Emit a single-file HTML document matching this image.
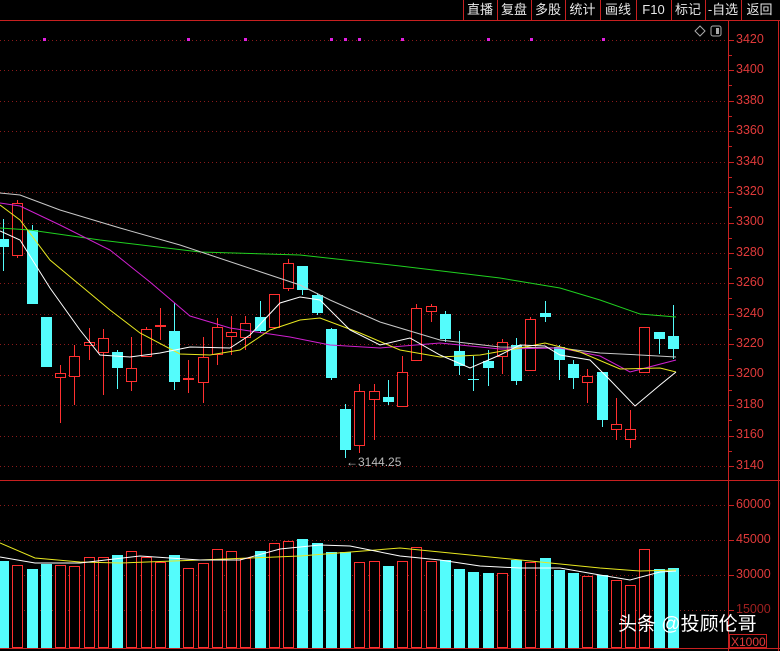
<!DOCTYPE html>
<html><head><meta charset="utf-8"><style>
body{margin:0;background:#000;width:780px;height:651px;overflow:hidden;font-family:"Liberation Sans","Noto Sans CJK SC",sans-serif}
svg{position:absolute;left:0;top:0}
.tb{position:absolute;top:0;height:20px;line-height:20px;color:#e8e8e8;font-size:13px;text-align:center}
.ax{position:absolute;left:736px;color:#e03a3a;font-size:12.5px;font-family:"Liberation Sans",sans-serif}
#c rect,#c line{shape-rendering:crispEdges}
</style></head><body>
<svg id="s" width="780" height="651" xmlns="http://www.w3.org/2000/svg">
<g id="grid"></g><g id="m" fill="none" stroke-width="1"></g><g id="c"></g><g id="m2" fill="none" stroke-width="1"></g>
<line x1="0" y1="20.5" x2="780" y2="20.5" stroke="#c82020"/>
<line x1="0" y1="480.5" x2="780" y2="480.5" stroke="#c82020"/>
<line x1="0" y1="648.5" x2="780" y2="648.5" stroke="#c82020"/>
<line x1="728.5" y1="20" x2="728.5" y2="651" stroke="#c82020"/>
<line x1="778.5" y1="20" x2="778.5" y2="651" stroke="#c82020"/>
<g stroke="#c82020">
<line x1="463.5" y1="0" x2="463.5" y2="20"/><line x1="497.5" y1="0" x2="497.5" y2="20"/><line x1="531.5" y1="0" x2="531.5" y2="20"/><line x1="565.5" y1="0" x2="565.5" y2="20"/><line x1="600.5" y1="0" x2="600.5" y2="20"/><line x1="636.5" y1="0" x2="636.5" y2="20"/><line x1="671.5" y1="0" x2="671.5" y2="20"/><line x1="705.5" y1="0" x2="705.5" y2="20"/><line x1="741.5" y1="0" x2="741.5" y2="20"/>
</g>
<path d="M700 26 L705 31 L700 36 L695 31Z" fill="none" stroke="#aaa"/>
<rect x="711" y="26" width="10" height="10" rx="2" fill="none" stroke="#aaa"/><rect x="716" y="28" width="3" height="6" fill="#aaa"/>
<text x="346" y="466" fill="#bbb" font-size="12" font-family="Liberation Sans">←3144.25</text>
<rect x="729.5" y="634.5" width="37" height="13" fill="none" stroke="#c82020"/>
<text x="731" y="646" fill="#e03a3a" font-size="12" font-family="Liberation Sans">X1000</text>
<text x="618" y="630" fill="#fff" font-size="19" font-family="Liberation Sans,Noto Sans CJK SC,sans-serif">头条 @投顾伦哥</text>
</svg>
<div class="tb" style="left:463px;width:34px">直播</div>
<div class="tb" style="left:497px;width:34px">复盘</div>
<div class="tb" style="left:531px;width:34px">多股</div>
<div class="tb" style="left:565px;width:35px">统计</div>
<div class="tb" style="left:600px;width:36px">画线</div>
<div class="tb" style="left:636px;width:35px">F10</div>
<div class="tb" style="left:671px;width:34px">标记</div>
<div class="tb" style="left:705px;width:36px">-自选</div>
<div class="tb" style="left:741px;width:37px">返回</div>
<div class="ax" style="top:32px">3420</div><div class="ax" style="top:62px">3400</div><div class="ax" style="top:93px">3380</div>
<div class="ax" style="top:123px">3360</div><div class="ax" style="top:154px">3340</div><div class="ax" style="top:184px">3320</div>
<div class="ax" style="top:214px">3300</div><div class="ax" style="top:245px">3280</div><div class="ax" style="top:275px">3260</div>
<div class="ax" style="top:306px">3240</div><div class="ax" style="top:336px">3220</div><div class="ax" style="top:366px">3200</div>
<div class="ax" style="top:397px">3180</div><div class="ax" style="top:427px">3160</div><div class="ax" style="top:458px">3140</div>
<div class="ax" style="top:497px">60000</div><div class="ax" style="top:532px">45000</div><div class="ax" style="top:567px">30000</div><div class="ax" style="top:602px;color:#a02020">15000</div>
<script>
var ns="http://www.w3.org/2000/svg";
function el(p,t,a){var e=document.createElementNS(ns,t);for(var k in a)e.setAttribute(k,a[k]);document.getElementById(p).appendChild(e);return e;}
for(var i=0;i<15;i++){var y=Math.round(40+i*30.43)+.5;el('grid','line',{x1:0,x2:728,y1:y,y2:y,stroke:'#8a1a1a','stroke-dasharray':'1 3'});el('grid','line',{x1:728,x2:734,y1:y,y2:y,stroke:'#c82020'});if(i<14)el('grid','line',{x1:728,x2:732,y1:y+15,y2:y+15,stroke:'#c82020'});}
[505,540,575,610].forEach(function(y){el('grid','line',{x1:0,x2:728,y1:y+.5,y2:y+.5,stroke:'#8a1a1a','stroke-dasharray':'1 3'});el('grid','line',{x1:728,x2:734,y1:y+.5,y2:y+.5,stroke:'#c82020'});});
[44,188,245,331,345,359,402,488,531,603].forEach(function(x){el('grid','rect',{x:x-1,y:38,width:3,height:3,fill:'#e020e0'});});
var C=[[0,239,247,219,271,561],[1,203,256,200,258,565],[0,230,304,225,304,569],[0,317,367,317,367,564],[1,373,378,365,423,565],[1,356,377,345,405,566],[1,342,346,328,360,557],[1,338,353,329,395,557],[0,352,368,350,389,555],[1,368,382,337,391,551],[1,329,357,327,357,557],[1,325,327,308,340,562],[0,331,382,303,390,555],[1,378,380,360,393,568],[1,357,383,337,403,563],[1,327,355,318,365,549],[1,332,337,316,355,551],[1,323,338,316,350,558],[0,317,331,301,333,551],[1,294,328,294,328,543],[1,263,289,259,291,541],[0,266,290,266,295,539],[0,295,313,293,315,543],[0,329,378,328,380,552],[0,409,450,404,458,552],[1,391,446,384,453,562],[1,391,400,384,440,561],[0,397,402,380,405,566],[1,372,407,356,407,561],[1,308,361,304,361,547],[1,306,312,304,322,561],[0,314,339,311,342,560],[0,351,366,331,375,569],[0,379,380,356,391,572],[0,361,368,350,386,573],[1,342,357,339,374,573],[0,345,381,338,385,560],[1,319,371,317,371,562],[0,313,317,301,322,558],[0,347,360,345,380,570],[0,364,378,360,389,573],[1,376,383,369,403,576],[0,372,420,372,427,575],[1,424,430,398,440,580],[1,429,440,410,448,585],[1,327,373,327,373,549],[0,332,339,332,354,569],[0,336,349,305,359,568]];
C.forEach(function(c,i){var x=Math.round(3+14.25*i),col=c[0]?'#ff3030':'#54fcfc';
if(c[0]){
el('c','rect',{x:x,y:c[3],width:1,height:c[1]-c[3],fill:col});
el('c','rect',{x:x,y:c[2],width:1,height:Math.max(0,c[4]-c[2]),fill:col});
var h=Math.max(1,c[2]-c[1]);
el('c','rect',{x:x-5,y:c[1],width:11,height:h,fill:col});
if(h>2)el('c','rect',{x:x-4,y:c[1]+1,width:9,height:h-2,fill:'#000'});
el('c','rect',{x:x-5,y:c[5],width:11,height:648-c[5],fill:col});
el('c','rect',{x:x-4,y:c[5]+1,width:9,height:646-c[5],fill:'#000'});
}else{
el('c','rect',{x:x,y:c[3],width:1,height:c[4]-c[3],fill:col});
el('c','rect',{x:x-5,y:c[1],width:11,height:Math.max(1,c[2]-c[1]),fill:col});
el('c','rect',{x:x-5,y:c[5],width:11,height:648-c[5],fill:col});}
});
function pl(g,pts,col){el(g,'polyline',{points:pts,stroke:col});}
pl('m2',"0,228 30,230 100,240 200,252 300,255 400,266 500,278 560,288 600,300 640,314 676,317","#20d020");
pl('m2',"0,193 20,195 60,210 120,228 180,245 240,265 300,285 330,300 380,322 440,340 500,347 560,348 600,353 640,355 676,357","#c8c8c8");
pl('m2',"0,203 20,206 60,225 110,250 150,282 190,316 230,328 290,337 330,345 380,348 440,343 500,349 560,348 600,356 630,372 676,360","#d020d0");
pl('m2',"0,205 20,220 50,260 80,285 110,310 140,333 180,354 210,355 240,350 270,330 300,320 320,318 360,333 400,350 440,357 480,355 520,348 545,343 580,352 620,369 660,368 676,372","#e8e820");
pl('m2',"0,231 20,240 50,288 80,330 100,355 130,357 160,353 190,347 230,348 250,335 280,303 300,297 320,300 350,330 380,345 410,338 440,355 470,368 500,355 520,345 545,346 560,355 590,360 610,380 635,406 660,385 676,372","#ffffff");
pl('m2',"0,543 35,558 80,562 120,563 200,560 300,556 400,548 500,558 600,568 640,571 676,570","#e8e820");
pl('m2',"0,557 35,563 80,563 140,556 200,560 240,560 280,549 320,545 350,546 400,556 440,560 480,566 520,568 560,568 600,575 630,580 660,572 676,571","#ffffff");
</script>
</body></html>
